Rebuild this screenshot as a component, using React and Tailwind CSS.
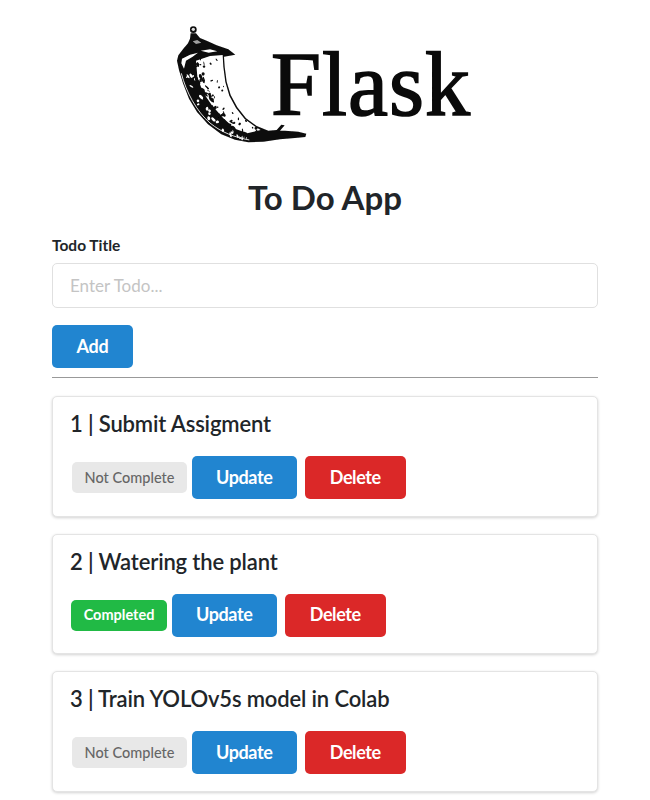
import React from 'react';

const font = { fontFamily: 'Lato, "Open Sans", sans-serif' };

// outer and inner edge of the horn, used to scatter the engraving flecks
const outerEdge = [[60, 125], [70, 190], [88, 235], [112, 275], [145, 312], [185, 342], [225, 358], [265, 366]];
const innerEdge = [[188, 110], [192, 140], [198, 185], [210, 225], [230, 262], [256, 295], [288, 318], [325, 332]];

function makeFlecks() {
  const dark = [];
  const light = [];
  let seed = 11;
  const rnd = () => {
    seed = (seed * 16807) % 2147483647;
    return seed / 2147483647;
  };
  for (let i = 0; i < 520; i++) {
    const t = rnd() * (outerEdge.length - 1.001);
    const k = Math.floor(t);
    const f = t - k;
    const u = 0.1 + rnd() * 0.85;
    const ox = outerEdge[k][0] + (outerEdge[k + 1][0] - outerEdge[k][0]) * f;
    const oy = outerEdge[k][1] + (outerEdge[k + 1][1] - outerEdge[k][1]) * f;
    const ix = innerEdge[k][0] + (innerEdge[k + 1][0] - innerEdge[k][0]) * f;
    const iy = innerEdge[k][1] + (innerEdge[k + 1][1] - innerEdge[k][1]) * f;
    const fleck = {
      x: ox + (ix - ox) * u,
      y: oy + (iy - oy) * u,
      rx: 1.5 + rnd() * (u < 0.55 ? 8 : 3),
      ry: 1.2 + rnd() * 3.5,
      a: Math.round(rnd() * 70 + 30),
    };
    if (u < 0.3) {
      if (rnd() < 0.22) light.push(fleck);
    } else if (rnd() < (u < 0.55 ? 0.6 : 0.1)) {
      dark.push(fleck);
    }
  }
  return { dark, light };
}

const flecks = makeFlecks();

function FlaskLogo() {
  return (
    <svg width="330" height="150" viewBox="160 10 330 150" className="block">
      <defs>
        <filter id="soft" x="-5%" y="-5%" width="110%" height="110%">
          <feGaussianBlur stdDeviation="0.4" />
        </filter>
      </defs>
      <g transform="translate(160 20) scale(0.3333)" filter="url(#soft)">
        {/* horn silhouette */}
        <path
          d="M92 40 L90 56 L84 70 L70 86 L55 106 L51 122 L57 150 L69 190 L87 236 L111 276 L144 313 L184 343 L225 359 L265 367 L310 365 L360 358 L405 354 L436 351 L439 341 L415 335 L375 332 L360 332 L374 316 L364 314 L350 330 L325 332 L290 318 L258 295 L232 262 L212 225 L200 185 L194 140 L192 110 L226 104 L205 88 L170 76 L140 62 L120 54 L108 40 Z"
          fill="#0a0a0a"
        />
        <circle cx="100" cy="29" r="10" fill="#0a0a0a" />
        <circle cx="100" cy="28" r="5" fill="#dddddd" />
        {/* light body of the horn */}
        <path
          d="M108 122 L150 108 L188 105 L190 140 L196 186 L208 227 L228 264 L254 297 L286 320 L302 330 L262 340 L225 326 L190 295 L155 255 L128 215 L112 170 Z"
          fill="#ffffff"
        />
        <path d="M66 116 L90 104 L114 98 L98 110 L78 122 L72 146 L64 130 Z" fill="#ffffff" />
        <path d="M122 92 L150 88 L172 94 L146 98 Z" fill="#ffffff" />
        <path d="M98 64 L112 60 L124 68 L108 72 Z" fill="#a0a0a0" />
        {/* thin rim along the outside */}
        <path d="M64 160 C78 215 110 275 150 309 C185 338 225 352 268 360" fill="none" stroke="#e0e0e0" strokeWidth="3" />
        {/* engraving */}
        {flecks.light.map((s, i) => (
          <ellipse key={i} cx={s.x} cy={s.y} rx={s.rx} ry={s.ry} transform={`rotate(${s.a} ${s.x} ${s.y})`} fill="#ffffff" />
        ))}
        {flecks.dark.map((s, i) => (
          <ellipse key={i} cx={s.x} cy={s.y} rx={s.rx} ry={s.ry} transform={`rotate(${s.a} ${s.x} ${s.y})`} fill="#0a0a0a" />
        ))}
      </g>
      <text
        x="271"
        y="115"
        fontSize="90"
        fill="#0a0a0a"
        stroke="#0a0a0a"
        strokeWidth="1.6"
        textLength="199"
        lengthAdjust="spacing"
        style={{ fontFamily: '"Liberation Serif", serif' }}
      >
        Flask
      </text>
    </svg>
  );
}

function TodoCard({ id, title, done }) {
  return (
    <div className="bg-white border border-[#e4e4e4] rounded-[5px] shadow-[0_1px_3px_rgba(0,0,0,0.18)] h-[120.5px] px-[17px] pt-[12px]">
      <h2 className="text-[22px] leading-[30px] font-semibold tracking-[-0.15px] text-[#212529]">
        {id} | {title}
      </h2>
      <div className="flex items-center mt-[17px] h-[43px]">
        <span
          className={
            done
              ? 'h-[31px] w-[96px] ml-px flex items-center justify-center rounded-[5px] text-[14.5px] font-bold bg-[#21ba45] text-white'
              : 'h-[31px] w-[115px] ml-[2px] flex items-center justify-center rounded-[5px] text-[14.5px] font-medium bg-[#e8e8e8] text-[#666666]'
          }
        >
          {done ? 'Completed' : 'Not Complete'}
        </span>
        <button className="ml-[4.5px] h-[43px] w-[105.5px] pb-[2px] rounded-[5px] bg-[#2185d0] text-white text-lg tracking-[-0.4px] font-bold">
          Update
        </button>
        <button className="ml-2 h-[43px] w-[100.5px] pb-[2px] rounded-[5px] bg-[#db2828] text-white text-lg tracking-[-0.4px] font-bold">
          Delete
        </button>
      </div>
    </div>
  );
}

export default function App() {
  return (
    <div style={font} className="w-[650px] h-[800px] overflow-hidden bg-white">
      <div className="flex justify-center pt-[10px]">
        <FlaskLogo />
      </div>
      <div className="px-[52px]">
        <h1 className="text-center text-[33px] leading-[40px] font-bold text-[#212529] mt-[17px]">
          To Do App
        </h1>
        <label className="block mt-[19px] text-[15.5px] leading-[18px] font-bold text-[#212529]">Todo Title</label>
        <input
          placeholder="Enter Todo..."
          className="block w-full h-[45px] mt-[9px] px-[17px] text-[17px] border border-[#e0e0e0] rounded-[5px] placeholder:text-[#c4c4c4] outline-none"
        />
        <button className="block mt-[17px] h-[43px] w-[81px] pb-[2px] rounded-[5px] bg-[#2185d0] text-white text-lg tracking-[-0.2px] font-bold">
          Add
        </button>
        <hr className="mt-[9px] border-t border-[#999999]" />
        <div className="flex flex-col gap-[17px] mt-[18px]">
          <TodoCard id={1} title="Submit Assigment" />
          <TodoCard id={2} title="Watering the plant" done />
          <TodoCard id={3} title="Train YOLOv5s model in Colab" />
        </div>
      </div>
    </div>
  );
}
